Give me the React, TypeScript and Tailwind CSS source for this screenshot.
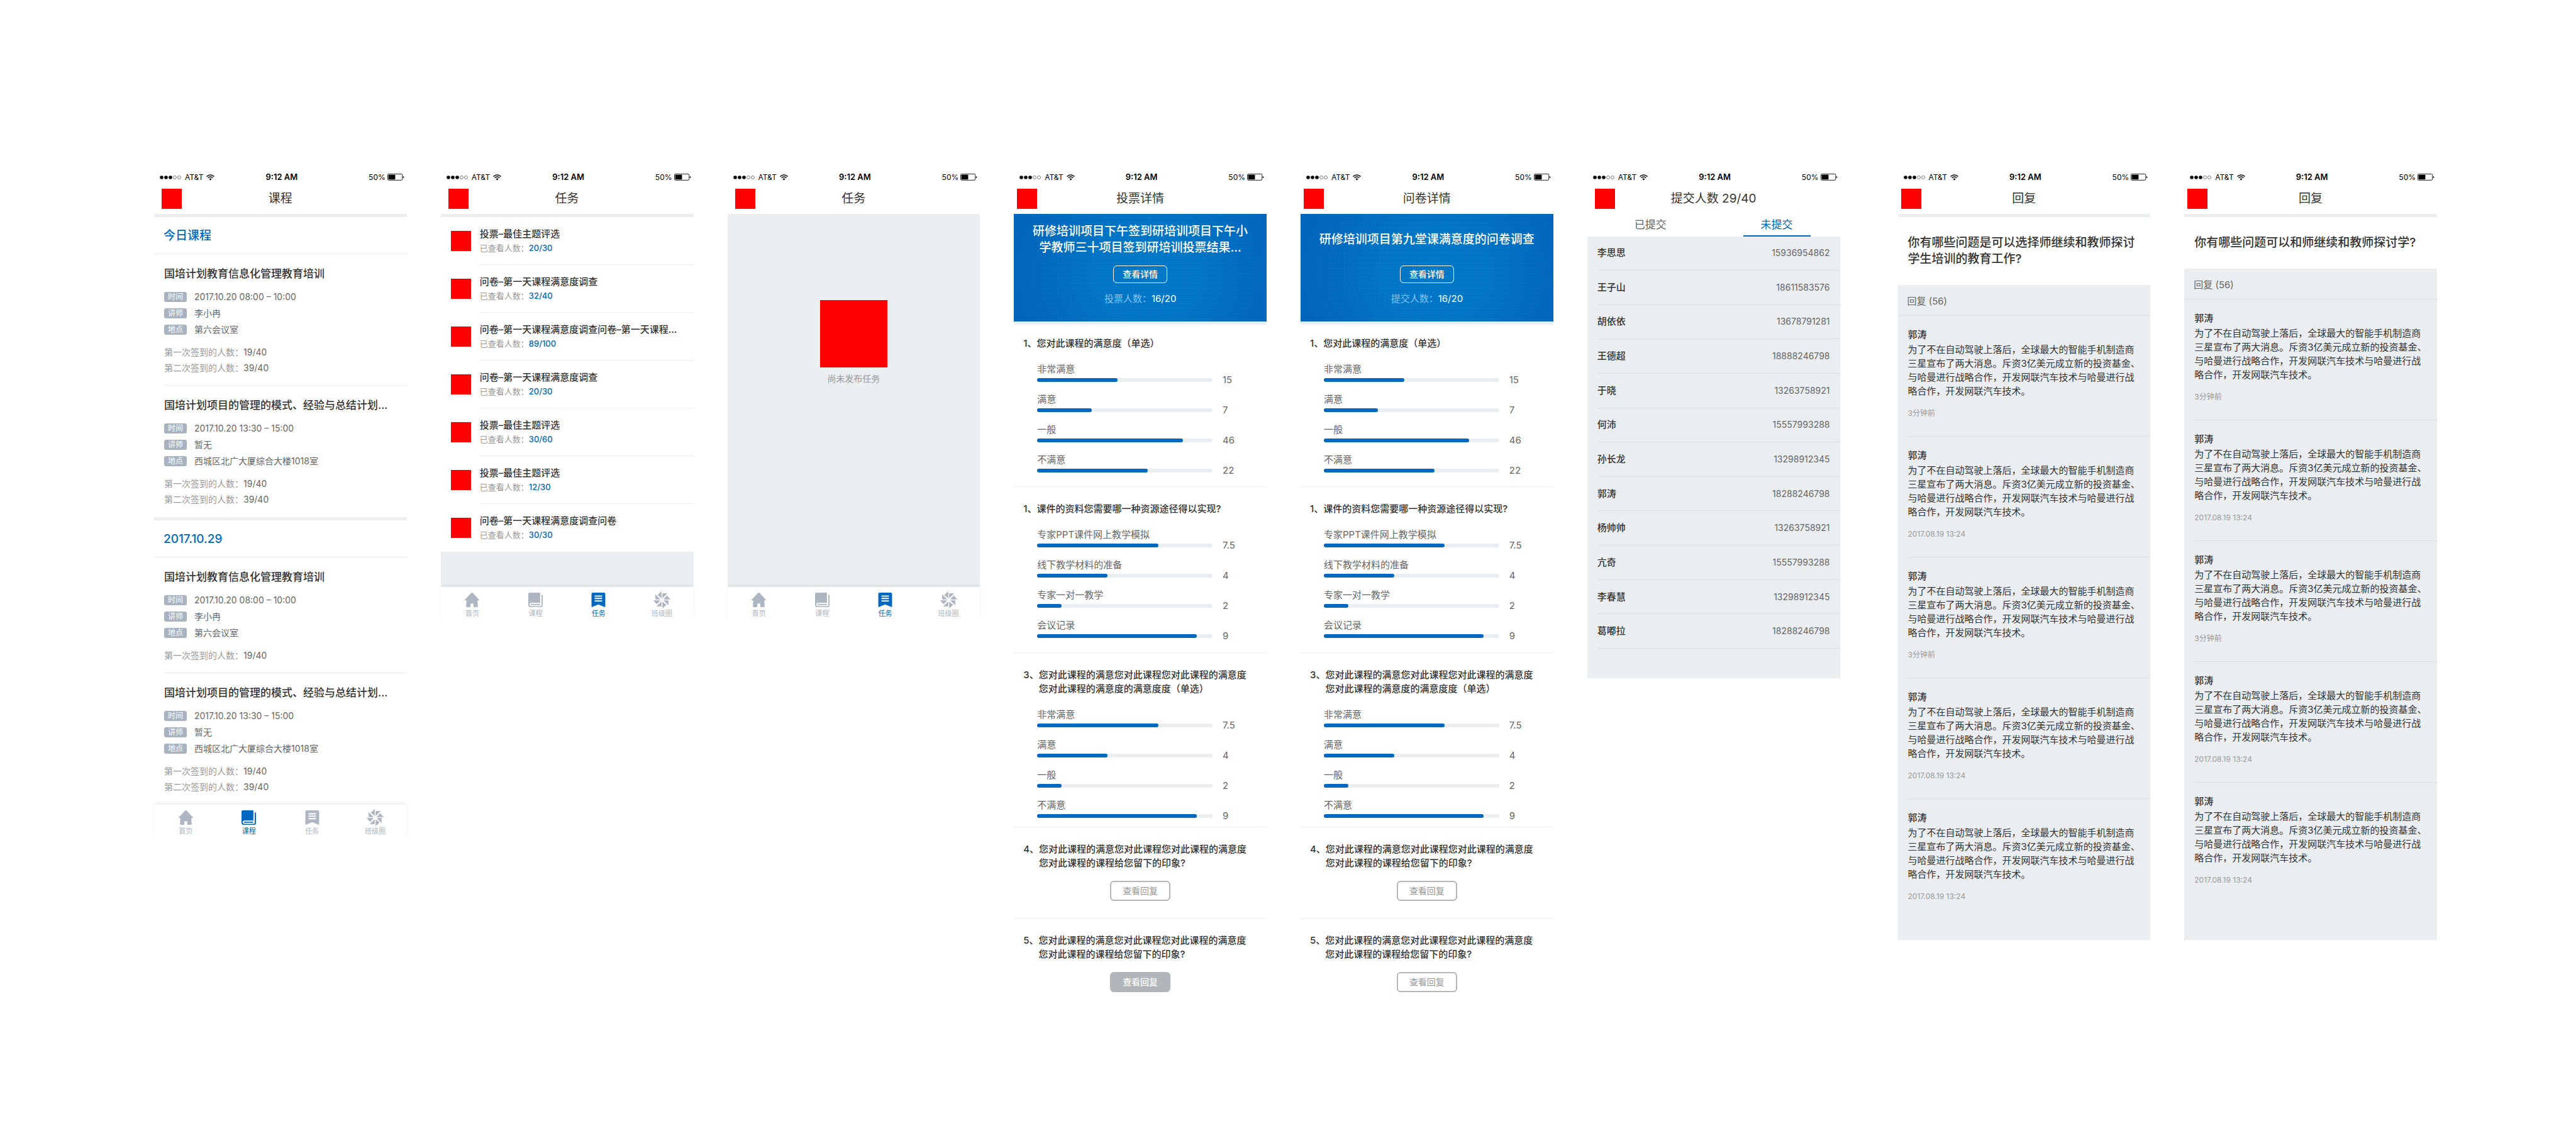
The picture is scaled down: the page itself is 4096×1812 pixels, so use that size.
import React from "react";

/* ---------- icons ---------- */

function WifiIcon() {
  return (
    <svg viewBox="0 0 25 18" className="h-[10px] w-[13px]" fill="none" stroke="currentColor" aria-hidden="true">
      <path d="M1 6.2Q12.5-3.4 24 6.2" strokeWidth="3" />
      <path d="M5 10.4Q12.5 4 20 10.4" strokeWidth="3" />
      <path d="M8.5 13.5Q12.5 10 16.5 13.5L12.5 18Z" fill="currentColor" stroke="none" />
    </svg>
  );
}

function BatteryIcon() {
  return (
    <svg viewBox="0 0 50 20" className="h-[11px] w-[27px]" fill="none" aria-hidden="true">
      <rect x="1" y="1" width="43" height="18" rx="3" stroke="currentColor" strokeWidth="1.6" />
      <rect x="3" y="3" width="20" height="14" rx="1" fill="currentColor" />
      <path d="M46 7q3 1 3 3t-3 3Z" fill="currentColor" />
    </svg>
  );
}

function SignalDots() {
  return (
    <svg viewBox="0 0 68 12" className="h-[6px] w-[36px]" fill="none" aria-hidden="true">
      <circle cx="6" cy="6" r="5.6" fill="currentColor" />
      <circle cx="20" cy="6" r="5.6" fill="currentColor" />
      <circle cx="34" cy="6" r="5.6" fill="currentColor" />
      <circle cx="48" cy="6" r="5" stroke="currentColor" />
      <circle cx="62" cy="6" r="5" stroke="currentColor" />
    </svg>
  );
}

function HomeIcon() {
  return (
    <svg viewBox="0 0 42 42" className="h-[23px] w-[23px]" fill="currentColor" aria-hidden="true">
      <path d="M18.5 1.2Q21-1 23.5 1.2L41.4 20.2Q42.6 22.500 40.5 22.500H37L38 40.5Q38 42 36.5 42H27Q25.5 42 25.5 40.5V35.5Q25.5 31 21 31T16.5 35.5V40.5Q16.5 42 15 42H5.5Q4 42 4 40.5L5 22.5H1.5Q-.6 22.5.6 20.2Z" />
    </svg>
  );
}

function BookIcon() {
  return (
    <svg viewBox="0 0 42 42" className="h-[23px] w-[23px]" fill="currentColor" aria-hidden="true">
      <path d="M4 0H33Q34.5 0 34.5 1.5V39H38.5V7.5Q38.5 6 40.25 6T42 7.5V38Q42 42 38 42H6Q0 42 0 36V4Q0 0 4 0Z" />
      <path d="M35 29.5H8.5A4.9 4.9 0 0 0 8.5 39.3H35Z" fill="#fff" />
      <path d="M34 32.8H8.5A1.5 1.5 0 0 0 8.5 36H34Z" />
    </svg>
  );
}

function TaskIcon() {
  return (
    <svg viewBox="0 0 42 42" className="h-[23px] w-[23px]" fill="currentColor" aria-hidden="true">
      <path d="M5 0H37Q41 0 41 4V40.5Q41 42.5 39 41.6L21 34.3 3 41.6Q1 42.5 1 40.5V4Q1 0 5 0Z" />
      <path d="M11.5 10H30.5M11.5 17H30.5M11.5 24H30.5" stroke="#fff" strokeWidth="3.6" strokeLinecap="round" />
    </svg>
  );
}

function CircleIcon() {
  return (
    <svg viewBox="-25 -25 50 50" className="-my-[2px] h-[27px] w-[27px]" fill="currentColor" stroke="currentColor" strokeWidth="1.2" strokeLinejoin="round" aria-hidden="true">
      {[0, 90, 180, 270].map((angle) => (
        <g key={angle} transform={`rotate(${angle})`}>
          <path d="M-2-24.300V-5.800L-12.400-14.500Z" />
          <path d="M2-18.800H15.200L2-5.800Z" />
        </g>
      ))}
    </svg>
  );
}

/* ---------- shared parts ---------- */

function Header({ title, inset }: { title: string; inset?: boolean }) {
  return (
    <header className="bg-white">
      <div className="grid h-[21px] grid-cols-[1fr_auto_1fr] items-center pl-[8px] pr-[4px] text-[13px] leading-[21px] text-black">
        <div className="flex items-center gap-[5px]">
          <SignalDots />
          <span className="text-[12px]">AT&amp;T</span>
          <WifiIcon />
        </div>
        <span className="font-semibold">9:12 AM</span>
        <div className="flex items-center justify-end gap-[3px]">
          <span className="text-[12px]">50%</span>
          <BatteryIcon />
        </div>
      </div>
      <div className={`grid h-[48px] grid-cols-[1fr_auto_1fr] items-center ${inset ? "px-[12px]" : "px-[5px]"}`}>
        <button type="button" aria-label="返回" className="h-[32px] w-[32px] bg-[#ff0000]" />
        <h1 className="text-[19px] leading-[26px] text-[#333]">{title}</h1>
      </div>
    </header>
  );
}

function Strip() {
  return <div className="h-[5px] bg-[#eaeef1]" />;
}

const TABS = [
  { label: "首页", Icon: HomeIcon },
  { label: "课程", Icon: BookIcon },
  { label: "任务", Icon: TaskIcon },
  { label: "班级圈", Icon: CircleIcon },
];

function TabBar({ active }: { active: string }) {
  return (
    <nav className="relative grid h-[53px] grid-cols-4 bg-white shadow-[0_-3px_4px_rgba(0,0,0,0.06)]">
      {TABS.map(({ label, Icon }) => (
        <a
          key={label}
          href={`#${label}`}
          className={`flex flex-col items-center gap-[2px] pt-[9px] text-[11px] leading-[16px] ${label === active ? "text-[#0068c0]" : "text-[#aeb6c2]"}`}
        >
          <Icon />
          <span>{label}</span>
        </a>
      ))}
    </nav>
  );
}

function Screen({ children, className = "" }: { children: React.ReactNode; className?: string }) {
  return <section className={`min-w-0 flex-1 ${className}`}>{children}</section>;
}

/* ---------- course list ---------- */

type Lesson = { title: string; time: string; teacher: string; place: string; counts: string[][] };

const FIRST = ["第一次签到的人数：", "19/40"];
const SECOND = ["第二次签到的人数：", "39/40"];

const basicLesson = (counts: string[][]): Lesson => ({
  title: "国培计划教育信息化管理教育培训",
  time: "2017.10.20 08:00 – 10:00",
  teacher: "李小冉",
  place: "第六会议室",
  counts,
});

const managementLesson: Lesson = {
  title: "国培计划项目的管理的模式、经验与总结计划...",
  time: "2017.10.20 13:30 – 15:00",
  teacher: "暂无",
  place: "西城区北广大厦综合大楼1018室",
  counts: [FIRST, SECOND],
};

function LessonItem({ lesson, last }: { lesson: Lesson; last?: boolean }) {
  const rows = [
    ["时间", lesson.time],
    ["讲师", lesson.teacher],
    ["地点", lesson.place],
  ];
  return (
    <article className={`ml-[16px] border-b pb-[15px] pt-[20px] ${last ? "border-transparent" : "border-[#e9edf0]"}`}>
      <h3 className="truncate text-[17px] font-medium leading-[22px] text-[#333]">{lesson.title}</h3>
      <dl className="mt-[13px]">
        {rows.map(([label, value]) => (
          <div key={label} className="flex h-[26px] items-center gap-[12px]">
            <dt className="w-[36px] rounded-[3px] bg-[#a8b2c1] text-center text-[12px] leading-[16px] text-white">{label}</dt>
            <dd className="text-[14px] leading-[20px] text-[#666]">{value}</dd>
          </div>
        ))}
      </dl>
      <div className="mt-[10px] text-[14px] leading-[25px] text-[#666]">
        {lesson.counts.map(([label, value]) => (
          <p key={label}>
            <span className="text-[#999]">{label}</span>
            {value}
          </p>
        ))}
      </div>
    </article>
  );
}

function DayHeading({ children }: { children: React.ReactNode }) {
  return (
    <h2 className="border-b border-[#e9edf0] pl-[15px] pt-[2px] text-[19px] font-medium leading-[56px] text-[#0068c0]">{children}</h2>
  );
}

function CoursesScreen() {
  return (
    <Screen>
      <Header title="课程" inset />
      <Strip />
      <DayHeading>今日课程</DayHeading>
      <LessonItem lesson={basicLesson([FIRST, SECOND])} />
      <LessonItem lesson={managementLesson} last />
      <Strip />
      <DayHeading>2017.10.29</DayHeading>
      <LessonItem lesson={basicLesson([FIRST])} />
      <LessonItem lesson={managementLesson} last />
      <TabBar active="课程" />
    </Screen>
  );
}

/* ---------- tasks ---------- */

const TASKS = [
  ["投票–最佳主题评选", "20/30"],
  ["问卷–第一天课程满意度调查", "32/40"],
  ["问卷–第一天课程满意度调查问卷–第一天课程...", "89/100"],
  ["问卷–第一天课程满意度调查", "20/30"],
  ["投票–最佳主题评选", "30/60"],
  ["投票–最佳主题评选", "12/30"],
  ["问卷–第一天课程满意度调查问卷", "30/30"],
];

function TasksScreen() {
  return (
    <Screen>
      <Header title="任务" inset />
      <Strip />
      <ul>
        {TASKS.map(([title, count], i) => (
          <li key={i} className="flex h-[76px] items-center gap-[14px] pl-[16px]">
            <div className="h-[32px] w-[32px] shrink-0 bg-[#ff0000]" />
            <div className={`h-full min-w-0 flex-1 border-b pt-[16px] ${i === TASKS.length - 1 ? "border-transparent" : "border-[#eaeef1]"}`}>
              <h3 className="truncate text-[15px] font-medium leading-[22px] text-[#333]">{title}</h3>
              <p className="text-[13px] leading-[23px] text-[#999]">
                已查看人数：<span className="font-medium text-[#0068c0]">{count}</span>
              </p>
            </div>
          </li>
        ))}
      </ul>
      <div className="h-[56px] bg-[#eaeef1]" />
      <TabBar active="任务" />
    </Screen>
  );
}

function EmptyTasksScreen() {
  return (
    <Screen>
      <Header title="任务" inset />
      <div className="flex h-[593px] flex-col items-center bg-[#eaeef1] pt-[137px]">
        <div className="h-[107px] w-[107px] bg-[#ff0000]" />
        <p className="mt-[7px] text-[14px] leading-[22px] text-[#999]">尚未发布任务</p>
      </div>
      <TabBar active="任务" />
    </Screen>
  );
}

/* ---------- poll and survey details ---------- */

type Option = { label: string; value: string; percent: number };

const SATISFACTION: Option[] = [
  { label: "非常满意", value: "15", percent: 46 },
  { label: "满意", value: "7", percent: 31 },
  { label: "一般", value: "46", percent: 83 },
  { label: "不满意", value: "22", percent: 63 },
];

const RESOURCES: Option[] = [
  { label: "专家PPT课件网上教学模拟", value: "7.5", percent: 69 },
  { label: "线下教学材料的准备", value: "4", percent: 40 },
  { label: "专家一对一教学", value: "2", percent: 14 },
  { label: "会议记录", value: "9", percent: 91 },
];

const RATING: Option[] = [
  { label: "非常满意", value: "7.5", percent: 69 },
  { label: "满意", value: "4", percent: 40 },
  { label: "一般", value: "2", percent: 14 },
  { label: "不满意", value: "9", percent: 91 },
];

function QuestionTitle({ number, lines }: { number: string; lines: string[] }) {
  return (
    <h3 className="flex pl-[15px] text-[15px] font-medium leading-[22px] text-[#333]">
      <span>{number}、</span>
      <span className="whitespace-pre-line">{lines.join("\n")}</span>
    </h3>
  );
}

function OptionBars({ options }: { options: Option[] }) {
  return (
    <div className="mt-[19px] flex flex-col gap-[17px] pl-[37px] pr-[44px]">
      {options.map(({ label, value, percent }) => (
        <div key={label} className="text-[15px] text-[#666]">
          <p className="leading-[22px]">{label}</p>
          <div className="mt-[3px] flex h-[6px] items-center gap-[16px]">
            <div className="h-[6px] flex-1 rounded-full bg-[#eaeef1]" role="progressbar" aria-label={label} aria-valuenow={percent}>
              <div className="h-full rounded-full bg-[#0068c0]" style={{ width: `${percent}%` }} />
            </div>
            <span className="w-[26px] leading-[20px]">{value}</span>
          </div>
        </div>
      ))}
    </div>
  );
}

function RepliesButton({ filled }: { filled?: boolean }) {
  return (
    <button
      type="button"
      className={`mx-auto mt-[17px] block h-[32px] w-[96px] rounded-[6px] border-2 border-[#b1b6ba] text-[14px] leading-[28px] ${filled ? "bg-[#b1b6ba] font-medium text-white" : "bg-white text-[#999]"}`}
    >
      查看回复
    </button>
  );
}

const LONG_LINE = "您对此课程的满意您对此课程您对此课程的满意度";
const IMPRESSION = [LONG_LINE, "您对此课程的课程给您留下的印象?"];

function DetailScreen({ title, heading, countLabel, filledLast }: { title: string; heading: string[]; countLabel: string; filledLast?: boolean }) {
  return (
    <Screen>
      <Header title={title} />
      <div className="bg-[linear-gradient(to_right,rgba(0,50,120,0.08)_1px,transparent_1px),linear-gradient(to_bottom,rgba(0,50,120,0.08)_1px,transparent_1px),radial-gradient(ellipse_52%_110%_at_53%_55%,#007dcc_0%,#0079ca_40%,#0068c0_100%)] bg-[length:4px_4px,4px_4px,auto] pb-[25px] pt-[15px] text-center text-white">
        <div className="flex h-[52px] flex-col justify-center">
          <h2 className="whitespace-pre-line text-[19px] font-medium leading-[26px]">{heading.join("\n")}</h2>
        </div>
        <button type="button" className="mx-auto mt-[15px] block h-[28px] w-[86px] rounded-[6px] border border-white text-[14px] font-medium leading-[26px]">
          查看详情
        </button>
        <p className="mt-[14px] text-[15px] leading-[22px]">
          <span className="text-[#80c3f3]">{countLabel}：</span>16/20
        </p>
      </div>
      <Strip />
      <div className="border-b border-[#eaeef1] pb-[22px] pt-[19px]">
        <QuestionTitle number="1" lines={["您对此课程的满意度（单选）"]} />
        <OptionBars options={SATISFACTION} />
      </div>
      <div className="border-b border-[#eaeef1] pb-[23px] pt-[24px]">
        <QuestionTitle number="1" lines={["课件的资料您需要哪一种资源途径得以实现?"]} />
        <OptionBars options={RESOURCES} />
      </div>
      <div className="border-b border-[#eaeef1] pb-[14px] pt-[24px]">
        <QuestionTitle number="3" lines={[LONG_LINE, "您对此课程的满意度的满意度度（单选）"]} />
        <OptionBars options={RATING} />
      </div>
      <div className="border-b border-[#eaeef1] pb-[27px] pt-[24px]">
        <QuestionTitle number="4" lines={IMPRESSION} />
        <RepliesButton />
      </div>
      <div className="pt-[24px]">
        <QuestionTitle number="5" lines={IMPRESSION} />
        <RepliesButton filled={filledLast} />
      </div>
    </Screen>
  );
}

/* ---------- submissions ---------- */

const PEOPLE = [
  ["李思思", "15936954862"],
  ["王子山", "18611583576"],
  ["胡依依", "13678791281"],
  ["王德超", "18888246798"],
  ["于晓", "13263758921"],
  ["何沛", "15557993288"],
  ["孙长龙", "13298912345"],
  ["郭涛", "18288246798"],
  ["杨帅帅", "13263758921"],
  ["亢奇", "15557993288"],
  ["李春慧", "13298912345"],
  ["葛嘟拉", "18288246798"],
];

function SubmissionsScreen() {
  return (
    <Screen>
      <Header title="提交人数 29/40" inset />
      <div className="grid h-[36px] grid-cols-2 justify-items-center bg-white text-[17px] leading-[34px]">
        <button type="button" className="w-[107px] border-b-2 border-transparent text-[#666]">
          已提交
        </button>
        <button type="button" className="w-[107px] border-b-2 border-[#0068c0] text-[#0068c0]">
          未提交
        </button>
      </div>
      <div className="bg-[#eaeef1] pb-[47px] pl-[16px]">
        <table className="h-[655px] w-full">
          <tbody>
            {PEOPLE.map(([name, phone]) => (
              <tr key={name} className="border-b border-[#d9dee2]">
                <th scope="row" className="text-left text-[15px] font-medium leading-[22px] text-[#333]">
                  {name}
                </th>
                <td className="pr-[16px] text-right text-[14px] leading-[22px] text-[#666]">{phone}</td>
              </tr>
            ))}
          </tbody>
        </table>
      </div>
    </Screen>
  );
}

/* ---------- replies ---------- */

const REPLY_LINES = [
  "为了不在自动驾驶上落后，全球最大的智能手机制造商",
  "三星宣布了两大消息。斥资3亿美元成立新的投资基金、",
  "与哈曼进行战略合作，开发网联汽车技术与哈曼进行战",
  "略合作，开发网联汽车技术。",
];

const REPLY_TIMES = ["3分钟前", "2017.08.19 13:24", "3分钟前", "2017.08.19 13:24", "2017.08.19 13:24"];

function RepliesScreen({ question, className, tail }: { question: string[]; className?: string; tail: string }) {
  return (
    <Screen className={className}>
      <Header title="回复" />
      <Strip />
      <h2 className="whitespace-pre py-[28px] pl-[16px] text-[19px] font-medium leading-[26px] text-[#333]">{question.join("\n")}</h2>
      <div className={`bg-[#eaeef1] ${tail}`}>
        <p className="border-b border-[#d9dee2] pl-[15px] pt-[4px] text-[15px] leading-[44px] text-[#666]">回复 (56)</p>
        {REPLY_TIMES.map((time, i) => (
          <article
            key={i}
            className={`ml-[16px] border-b pb-[27px] pt-[19px] text-[15px] leading-[22px] text-[#333] ${i === REPLY_TIMES.length - 1 ? "border-transparent" : "border-[#d9dee2]"}`}
          >
            <h3 className="font-medium">郭涛</h3>
            <p className="mt-[2px] whitespace-pre">{REPLY_LINES.join("\n")}</p>
            <time className="mt-[15px] block text-[12px] leading-[18px] text-[#999]">{time}</time>
          </article>
        ))}
      </div>
    </Screen>
  );
}

export default function App() {
  return (
    <main
      lang="zh-CN"
      className="flex min-h-screen items-start gap-[54px] bg-white pb-[100px] pl-[245px] pr-[221px] pt-[271px] font-['Inter','Noto_Sans_CJK_SC',sans-serif]"
    >
      <CoursesScreen />
      <TasksScreen />
      <EmptyTasksScreen />
      <DetailScreen
        title="投票详情"
        heading={["研修培训项目下午签到研培训项目下午小", "学教师三十项目签到研培训投票结果..."]}
        countLabel="投票人数"
        filledLast
      />
      <DetailScreen title="问卷详情" heading={["研修培训项目第九堂课满意度的问卷调查"]} countLabel="提交人数" />
      <SubmissionsScreen />
      <RepliesScreen
        className="ml-[38px]"
        question={["你有哪些问题是可以选择师继续和教师探讨", "学生培训的教育工作?"]}
        tail="pb-[32px]"
      />
      <RepliesScreen question={["你有哪些问题可以和师继续和教师探讨学?"]} tail="pb-[58px]" />
    </main>
  );
}
